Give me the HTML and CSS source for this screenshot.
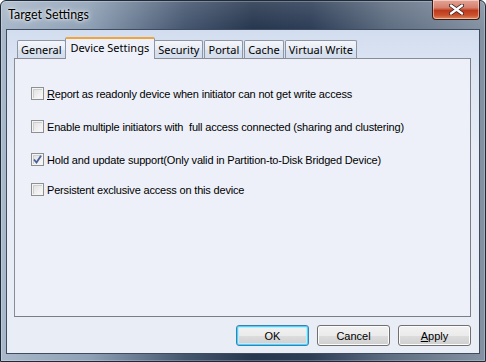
FILE: index.html
```html
<!DOCTYPE html>
<html>
<head>
<meta charset="utf-8">
<link rel="stylesheet" href="styles.css">
</head>
<body>
<div class="window">
  <div class="titlebar">
    <span class="title">Target Settings</span>
    <div class="close">
      <svg width="15" height="11" viewBox="0 0 15 11"><path d="M2 1.5 L13 9.5 M13 1.5 L2 9.5" stroke="#3a2020" stroke-width="4" stroke-linecap="round"/><path d="M2 1.5 L13 9.5 M13 1.5 L2 9.5" stroke="#ffffff" stroke-width="2.4" stroke-linecap="round"/></svg>
    </div>
  </div>
  <div class="client">
    <div class="tabs">
      <div class="tab">General</div>
      <div class="tab selected">Device Settings</div>
      <div class="tab">Security</div>
      <div class="tab">Portal</div>
      <div class="tab">Cache</div>
      <div class="tab">Virtual Write</div>
    </div>
    <div class="panel">
      <label class="row"><span class="box"></span><span><u>R</u>eport as readonly device when initiator can not get write access</span></label>
      <label class="row"><span class="box"></span><span>Enable multiple initiators with&nbsp; full access connected (sharing and clustering)</span></label>
      <label class="row"><span class="box checked"><svg width="9" height="9" viewBox="0 0 9 9"><path d="M1 4.5 L3.5 7.5 L8 0.8" fill="none" stroke="#4a5e9a" stroke-width="1.8"/></svg></span><span>Hold and update support(Only valid in Partition-to-Disk Bridged Device)</span></label>
      <label class="row"><span class="box"></span><span>Persistent exclusive access on this device</span></label>
    </div>
    <div class="buttons">
      <div class="btn default">OK</div>
      <div class="btn">Cancel</div>
      <div class="btn"><u>A</u>pply</div>
    </div>
  </div>
</div>
</body>
</html>
```

FILE: styles.css
```css
* { box-sizing: border-box; }
html, body { margin: 0; padding: 0; background: #ffffff; }
body { width: 486px; height: 362px; overflow: hidden; }

.window {
  width: 486px;
  height: 362px;
  border: 1px solid #1f2a38;
  border-radius: 6px 6px 0 0;
  background:
    linear-gradient(to bottom, rgba(255,255,255,0.12) 0, rgba(255,255,255,0) 28px),
    linear-gradient(to right, #a9b8ca 0%, #8fa1b6 18%, #45566f 38%, #27374f 52%, #2e3e57 64%, #5e6d81 80%, #8592a3 100%);
  display: flex;
  flex-direction: column;
  position: relative;
  box-shadow: inset 0 0 0 1px rgba(255,255,255,0.25);
}

.titlebar {
  height: 28px;
  flex: none;
  display: flex;
  align-items: flex-start;
  padding-left: 7px;
}
.title {
  font-family: Lato, sans-serif;
  font-size: 12.5px;
  color: #000;
  margin-top: 6px;
  text-shadow: 0 0 6px rgba(255,255,255,0.9), 0 0 3px rgba(255,255,255,0.9);
}
.close {
  position: absolute;
  top: -1px;
  right: 5px;
  width: 48px;
  height: 20px;
  border: 1px solid #3b1a16;
  border-top: none;
  border-radius: 0 0 4px 4px;
  background: linear-gradient(to bottom, #e6a294 0%, #d4826f 40%, #bf3a1c 55%, #c9512e 80%, #e08a5a 100%);
  box-shadow: inset 0 0 0 1px rgba(255,255,255,0.45);
  display: flex;
  align-items: center;
  justify-content: center;
}

.client {
  flex: 1;
  margin: 0 5px 7px 5px;
  border: 1px solid #3f4c5e;
  background: linear-gradient(to bottom, #d2ddef 0, #dde5f3 40px, #e7ecf6 120px, #e9edf6 100%);
  padding: 7px 8px 7px 7px;
  display: flex;
  flex-direction: column;
}

.tabs {
  display: flex;
  align-items: flex-end;
  height: 21px;
  padding-left: 3px;
  position: relative;
  z-index: 1;
}
.tab {
  font-family: "Noto Sans", sans-serif;
  font-size: 11px;
  color: #000;
  height: 18px;
  line-height: 17px;
  padding: 0 3px;
  margin-right: 1px;
  border: 1px solid #8c96a5;
  border-bottom: none;
  border-radius: 2px 2px 0 0;
  background: linear-gradient(to bottom, #f4f6fa 0%, #e6ebf4 50%, #d9e1ee 51%, #d4deec 100%);
}
.tab.selected {
  height: 22px;
  margin: 0 -1px 0 -2px;
  padding: 0 5px;
  border-color: #8c96a5;
  border-top: 2px solid #f0a43c;
  background: #eef1f9;
  line-height: 18px;
  position: relative;
  z-index: 2;
  margin-bottom: -1px;
}

.panel {
  height: 259px;
  flex: none;
  border: 1px solid #898c95;
  border-right-color: #7a7d85;
  border-bottom-color: #7a7d85;
  background: #edf0f8;
  padding-top: 28px;
  padding-left: 16px;
}
.row {
  display: flex;
  align-items: center;
  height: 13px;
  margin-bottom: 20px;
  font-family: "Liberation Sans", Arial, sans-serif;
  font-size: 11px;
  letter-spacing: -0.18px;
  color: #000;
}
.row:nth-child(3) { margin-bottom: 17px; }
.box {
  width: 13px;
  height: 13px;
  flex: none;
  border: 1px solid #8e8f8f;
  background: linear-gradient(135deg, #dcdcdc 0%, #f0f0f0 60%, #fbfbfb 100%);
  box-shadow: inset 0 0 0 1px #f4f4f4, inset 1px 1px 0 1px #cfcfcf;
  margin-right: 3px;
  display: flex;
  align-items: center;
  justify-content: center;
}

.buttons {
  display: flex;
  justify-content: flex-end;
  gap: 8px;
  margin-top: 8px;
}
.btn {
  width: 73px;
  height: 21px;
  border: 1px solid #707070;
  border-radius: 3px;
  background: linear-gradient(to bottom, #f2f2f2 0%, #ebebeb 50%, #dddddd 51%, #cfcfcf 100%);
  box-shadow: inset 0 0 0 1px #fcfcfc;
  font-family: "Liberation Sans", Arial, sans-serif;
  font-size: 11px;
  color: #000;
  display: flex;
  align-items: center;
  justify-content: center;
}
.btn.default {
  border-color: #3c7fb1;
  box-shadow: inset 0 0 0 1px #48d6fb, inset 0 0 0 2px #c4e9f8;
}
```
